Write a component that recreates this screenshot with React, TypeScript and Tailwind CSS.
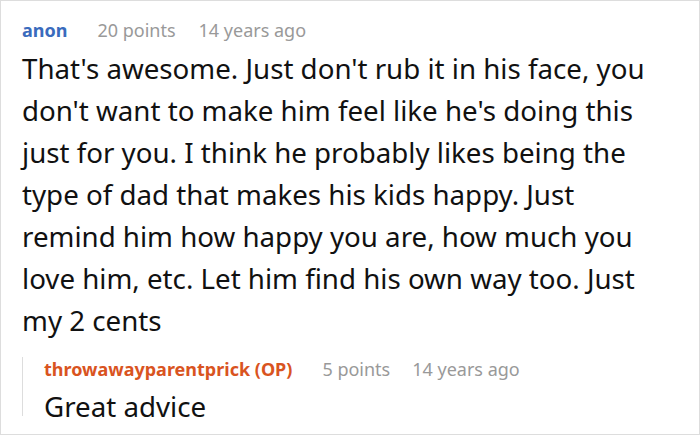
export default function App() {
  return (
    <div
      className="w-[700px] h-[435px] border border-[#dddddd] bg-white pl-[21px] pr-2 pt-[17px]"
      style={{ fontFamily: '"Noto Sans", sans-serif' }}
    >
      <div className="flex items-center text-[18px] leading-[24px]">
        <span className="font-bold text-[#3a6bbd]">anon</span>
        <span className="ml-[30px] text-[#999999]">20 points</span>
        <span className="ml-[23px] text-[#999999]">14 years ago</span>
      </div>
      <p className="mt-[5px] text-[27.7px] leading-[42px] text-[#111111] whitespace-nowrap">
        That's awesome. Just don't rub it in his face, you
        <br />
        don't want to make him feel like he's doing this
        <br />
        just for you. I think he probably likes being the
        <br />
        type of dad that makes his kids happy. Just
        <br />
        remind him how happy you are, how much you
        <br />
        love him, etc. Let him find his own way too. Just
        <br />
        my 2 cents
      </p>
      <div className="mt-[27px] border-l border-[#dddddd] pl-[21px]">
        <div className="-mt-[11px] flex items-center text-[18px] leading-[24px]">
          <span className="font-bold text-[#d9541f]">
            throwawayparentprick (OP)
          </span>
          <span className="ml-[30px] text-[#999999]">5 points</span>
          <span className="ml-[22px] text-[#999999]">14 years ago</span>
        </div>
        <p className="mt-[15px] text-[27.7px] leading-[20px] text-[#111111]">
          Great advice
        </p>
      </div>
    </div>
  );
}
